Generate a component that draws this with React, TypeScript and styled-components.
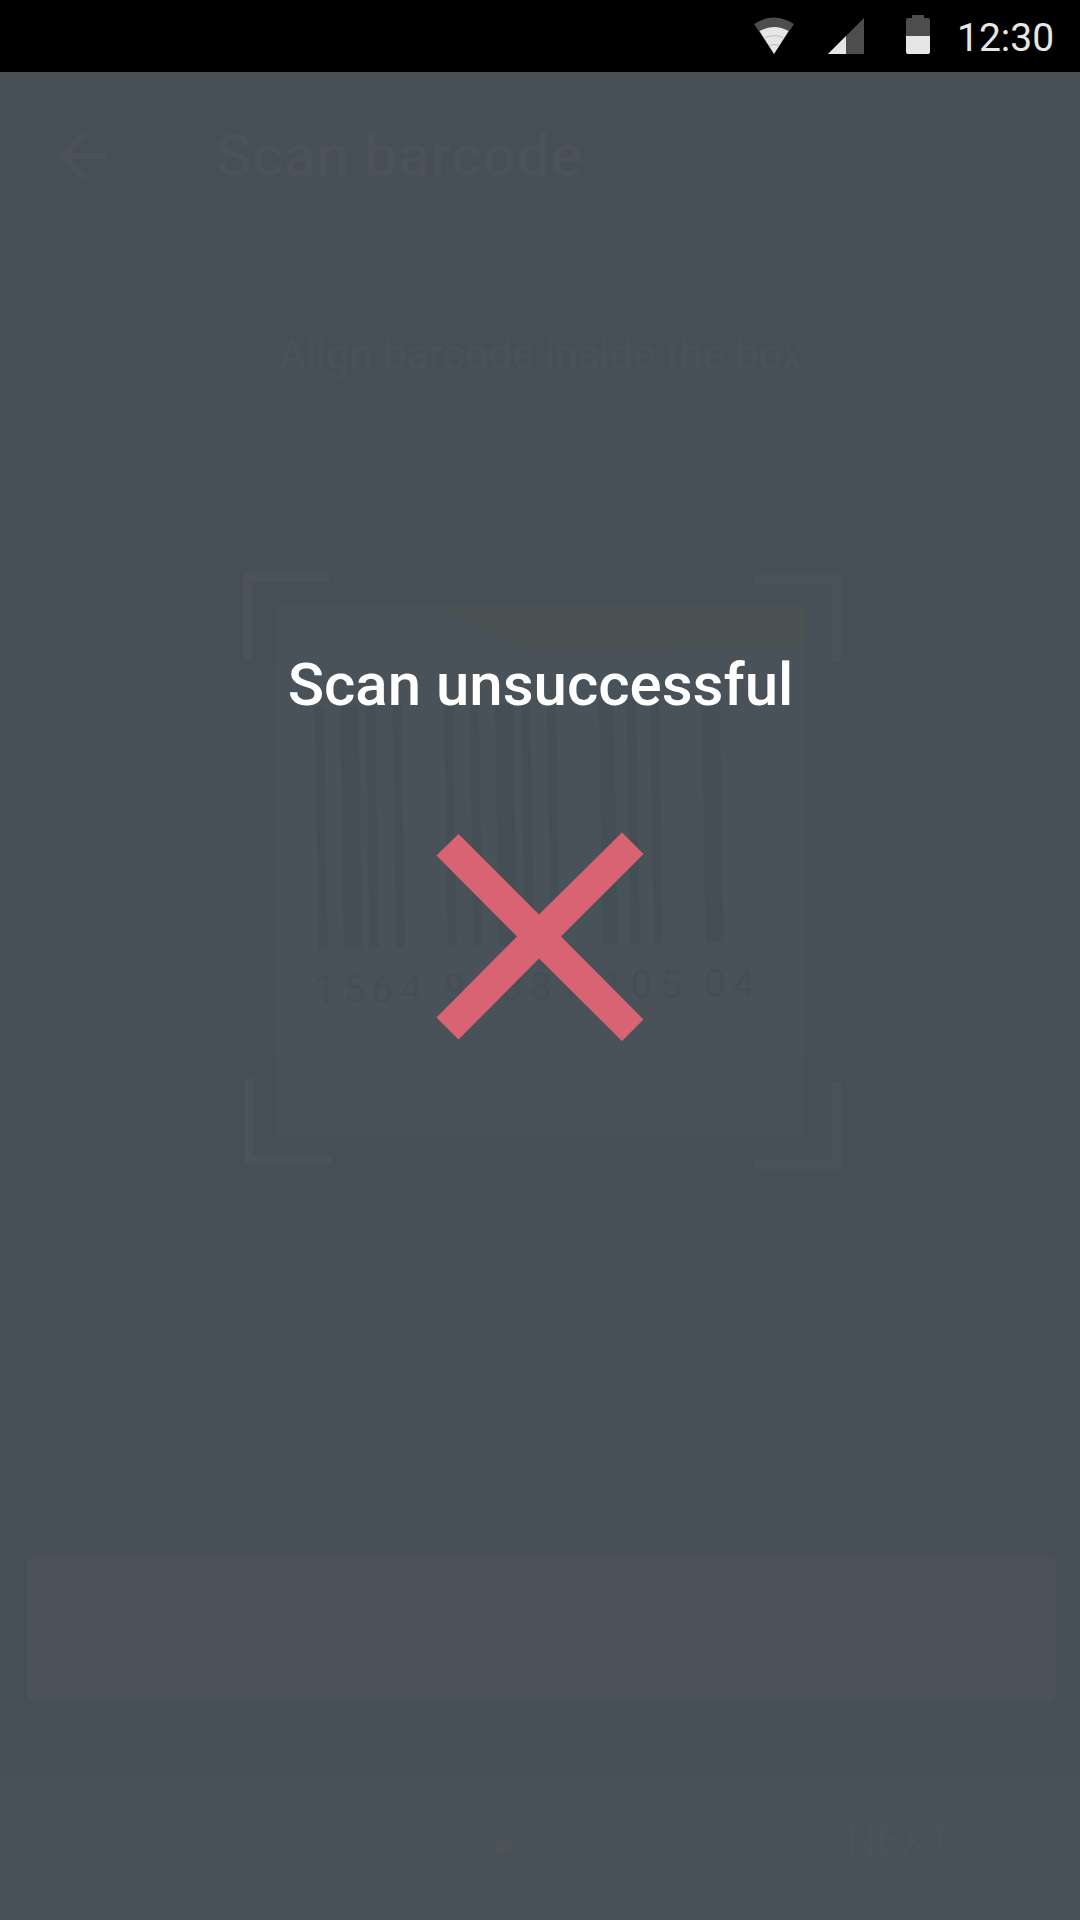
import React from "react";
import styled, { createGlobalStyle } from "styled-components";

const Global = createGlobalStyle`
  * { box-sizing: border-box; }
  body { margin: 0; background: #474f56; font-family: Roboto, "Noto Sans", sans-serif; }
`;

const Screen = styled.main`
  position: relative;
  display: flex;
  flex-direction: column;
  width: 1080px;
  height: 1920px;
  overflow: hidden;
  background: #474f56;
`;

const StatusBar = styled.header`
  display: flex;
  justify-content: flex-end;
  height: 72px;
  padding-right: 26px;
  background: #000;
`;

const StatusIcons = styled.svg`
  display: block;
  width: 203px;
  height: 72px;
`;

const Clock = styled.time`
  width: 97px;
  font-size: 39px;
  line-height: 76px;
  color: #e6e6e6;
  white-space: nowrap;
`;

const TitleBar = styled.div`
  display: flex;
  align-items: center;
  height: 168px;
  padding-left: 57px;
  gap: 109px;
  color: #4b5259;
`;

const BackArrow = styled.svg`
  width: 50px;
  height: 56px;
  flex: none;
`;

const Title = styled.h1`
  margin: 0;
  font-size: 60px;
  font-weight: 500;
  line-height: 72px;
`;

const Hint = styled.p`
  margin: 87px 0 0;
  padding-left: 1px;
  text-align: center;
  font-size: 41.8px;
  line-height: 56px;
  color: #4a5259;
`;

const Scanner = styled.svg`
  display: block;
  width: 600px;
  height: 598px;
  margin: 189px 0 0 242px;
`;

const SerialField = styled.div`
  display: flex;
  align-items: center;
  width: 1029px;
  height: 144px;
  margin: 387px 0 0 27px;
  padding: 1px 0 0 54px;
  border-radius: 6px;
  background: #4b5259;
  color: #4a5158;
  font-size: 42px;
`;

const Footer = styled.footer`
  display: flex;
  align-items: center;
  justify-content: flex-end;
  height: 144px;
  margin-top: 75px;
  padding: 0 130px 14px 0;
  background: #485059;
`;

const Dots = styled.div`
  display: flex;
  gap: 18px;
  margin: 10px 262px 0 0;
`;

const Dot = styled.i<{ $active?: boolean }>`
  width: 18px;
  height: 18px;
  border-radius: 50%;
  background: ${(p) => (p.$active ? "#4b5358" : "#49515a")};
`;

const Next = styled.span`
  width: 104px;
  font-size: 42px;
  line-height: 50px;
  color: #4b525b;
`;

const ResultOverlay = styled.section`
  position: absolute;
  inset: 72px 0 0;
  display: flex;
  flex-direction: column;
  align-items: center;
  padding-top: 577px;
`;

const ResultText = styled.h2`
  margin: 0;
  padding-left: 1px;
  font-size: 60px;
  font-weight: 500;
  line-height: 72px;
  color: #fff;
`;

const Cross = styled.svg`
  width: 208px;
  height: 210px;
  margin-top: 111px;
`;

// Each bar: left edge at the top, width, bottom edge.
const bars = [
  [314.8, 9, 949], [340, 18.3, 948.5], [366, 9, 948], [392.5, 8.7, 947.5],
  [444, 9, 947], [469.7, 9, 946.5], [495, 18.2, 946], [521, 9.2, 945.5],
  [547, 9, 945], [599, 14.7, 944], [626.7, 9.3, 943.5], [650, 9, 943.5],
  [701.8, 18, 942.5],
];

const digits: [string, number][] = [
  ["1", 324.5], ["5", 354.5], ["6", 382], ["4", 411], ["9", 454.5], ["6", 483],
  ["8", 512], ["8", 540.5], ["1", 569], ["1", 613], ["0", 641.5], ["5", 671],
  ["0", 714.5], ["4", 743.5],
];

export default function App() {
  return (
    <>
      <Global />
      <Screen>
        <StatusBar>
          <StatusIcons viewBox="754 0 203 72">
            <path d="M754 24Q774 11 794 24L774 54Z" fill="#4d4d4d" />
            <path d="M759.5 31Q774 23 788.5 31L774 54Z" fill="#e6e6e6" />
            <path d="M765 37.5Q774 34 783 37.5M769 45.5Q774 43.5 779 45.5" fill="none" stroke="#bdbdbd" strokeWidth="1" />
            <path d="M864 18V54H828Z" fill="#4d4d4d" />
            <path d="M846 36V54H828Z" fill="#e6e6e6" />
            <path d="M912 15H924V18H928Q930 18 930 20V36H906V20Q906 18 908 18H912Z" fill="#4d4d4d" />
            <path d="M906 36H930V52Q930 54 928 54H908Q906 54 906 52Z" fill="#e6e6e6" />
          </StatusIcons>
          <Clock>12:30</Clock>
        </StatusBar>
        <TitleBar>
          <BackArrow viewBox="0 0 50 56">
            <path d="M50 28H8M27 6.5L6 28L27 49.5" fill="none" stroke="currentColor" strokeWidth="6" />
          </BackArrow>
          <Title>Scan barcode</Title>
        </TitleBar>
        <Hint>Align barcode inside the box</Hint>
        <Scanner viewBox="242 572 600 598">
          <g fill="none" stroke="#4b5259" strokeWidth="9">
            <path d="M329 577.5H247.5V660" />
            <path d="M754 579.5H836.5V661.5" />
            <path d="M249 1078V1160.5H331" />
            <path d="M836.5 1082V1164.5H754" />
          </g>
          <rect x="276" y="605.5" width="528.5" height="529" fill="#495158" />
          <path d="M430 605.5H804.5V648L538 652Z" fill="#4a5254" />
          <path d="M276 657L804.5 648V1055.5L276 1062Z" fill="#4a5259" />
          <g fill="#464e55">
            {bars.map(([x, w, bottom]) => (
              <path key={x} d={`M${x} ${bottom - 243}h${w}L${x + w + 3.8} ${bottom}h${-w}Z`} />
            ))}
          </g>
          <g fill="#464e55" fontSize="39.5" textAnchor="middle">
            {digits.map(([digit, x]) => (
              <text key={x} x={x} y={1003.5 - (x - 322) * 0.0165}>{digit}</text>
            ))}
          </g>
        </Scanner>
        <SerialField>Manually enter serial number</SerialField>
        <Footer>
          <Dots><Dot $active /><Dot /><Dot /></Dots>
          <Next>NEXT</Next>
        </Footer>
        <ResultOverlay>
          <ResultText>Scan unsuccessful</ResultText>
          <Cross viewBox="436 832 208 210">
            <path d="M458.5 834L539 914.5L622 832.5L643.5 854L561 936.5L643.5 1019.5L622 1041L539 958.5L458.5 1039.5L436.5 1017.5L517 936.5L436.5 855.5Z" fill="#d86473" />
          </Cross>
        </ResultOverlay>
      </Screen>
    </>
  );
}
